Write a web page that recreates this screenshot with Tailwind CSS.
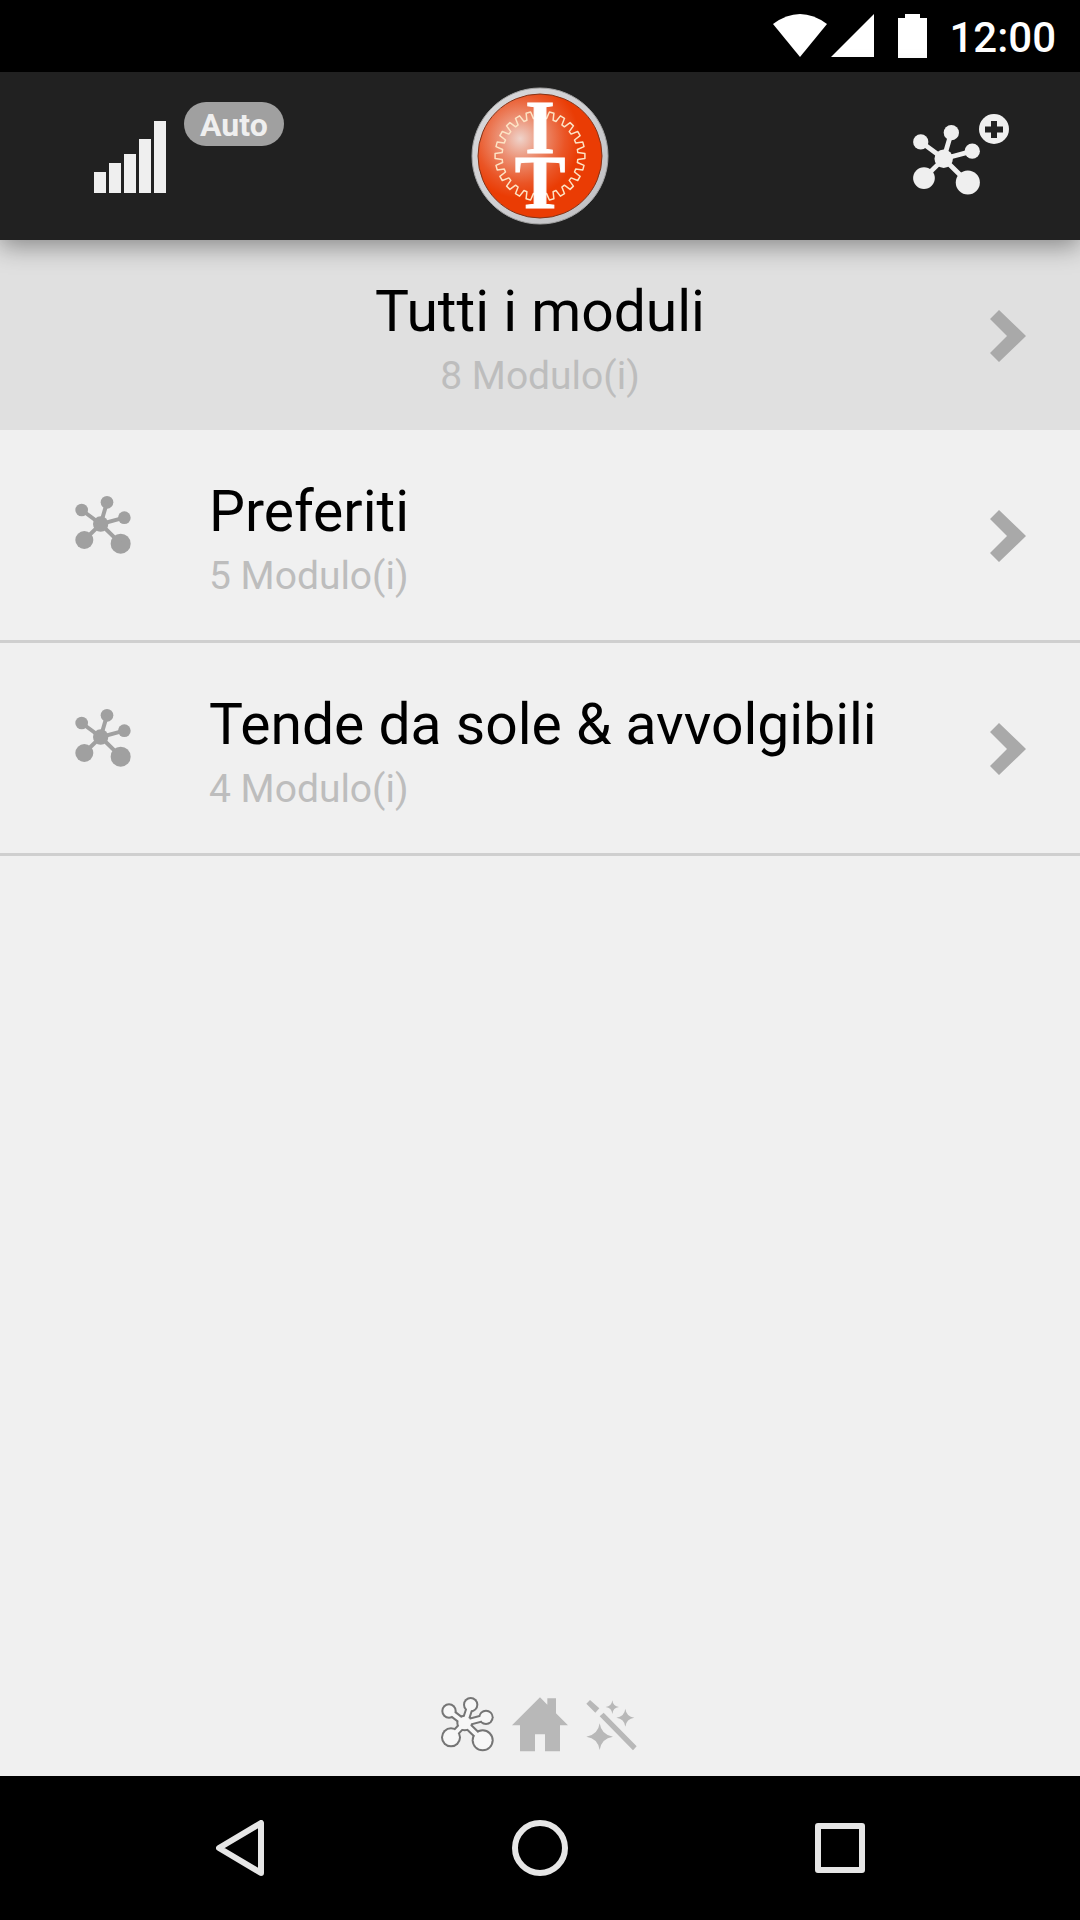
<!DOCTYPE html>
<html lang="it">
<head>
    <meta charset="UTF-8">
    <meta name="viewport" content="width=device-width, initial-scale=1.0">
    <title>Moduli</title>
    <script src="https://cdn.jsdelivr.net/npm/@tailwindcss/browser@4"></script>
</head>
<body class="flex flex-col min-h-screen bg-[#f0f0f0] font-[Roboto,sans-serif] text-black">
    <!-- shared icons -->
    <svg class="hidden" aria-hidden="true">
        <symbol id="molecule" viewBox="0 0 166 174">
            <g fill="currentColor" stroke="none">
                <circle cx="19" cy="42" r="19"/>
                <circle cx="95" cy="19" r="19"/>
                <circle cx="147" cy="65" r="19"/>
                <circle cx="76" cy="84" r="23"/>
                <circle cx="27" cy="132" r="27"/>
                <circle cx="136" cy="143" r="30"/>
            </g>
            <path d="M19 42L76 84L95 19M147 65L76 84L27 132M76 84L136 143" fill="none" stroke="currentColor" stroke-width="12"/>
        </symbol>
        <symbol id="chevron" viewBox="0 0 36 52">
            <path d="M0 9L9 0L36 26L9 52L0 43L17 26Z" fill="currentColor"/>
        </symbol>
    </svg>

    <div class="flex justify-end items-center h-[72px] bg-black text-white pr-6">
        <svg class="w-[54px] h-11" viewBox="0 0 54 44" fill="currentColor"><path d="M0 10Q27 -10 54 10L27 43Z"/></svg>
        <svg class="w-[43px] h-11 ml-1" viewBox="0 0 43 44" fill="currentColor"><path d="M43 0V43H0Z"/></svg>
        <svg class="w-[29px] h-11 ml-6" viewBox="0 0 29 44" fill="currentColor"><path d="M7 0H22V4H29V44H0V4H7Z"/></svg>
        <span class="ml-[22px] pt-[3px] text-[42px] leading-[48px] font-medium">12:00</span>
    </div>

    <header class="relative z-10 grid grid-cols-[1fr_auto_1fr] items-center h-[168px] bg-[#212121] text-[#efefef] shadow-[0_6px_24px_rgba(0,0,0,0.4)]">
        <button class="flex items-center h-full pl-[94px] gap-[18px]" aria-label="Segnale">
            <svg class="w-18 h-[74px]" viewBox="0 -2 72 74" fill="currentColor">
                <rect x="0" y="51" width="12" height="21"/>
                <rect x="15" y="42" width="12" height="30"/>
                <rect x="30" y="33" width="12" height="39"/>
                <rect x="45" y="18" width="12" height="54"/>
                <rect x="60" y="0" width="12" height="72"/>
            </svg>
            <span class="self-start mt-[30px] px-4 h-11 leading-[46px] rounded-full bg-[#a0a0a0] text-[32px] font-bold">Auto</span>
        </button>
        <svg class="w-[138px] h-[138px]" viewBox="-69 -69 138 138">
            <defs>
                <radialGradient id="orange" cx="0.34" cy="0.36" r="0.48">
                    <stop offset="0" stop-color="#efd3ca"/>
                    <stop offset="0.35" stop-color="#ec9276"/>
                    <stop offset="0.75" stop-color="#ea5526"/>
                    <stop offset="1" stop-color="#ea3c04"/>
                </radialGradient>
                <linearGradient id="rim" x1="0" y1="0" x2="1" y2="1">
                    <stop offset="0" stop-color="#d8d8da"/>
                    <stop offset="0.5" stop-color="#d0d0d3"/>
                    <stop offset="1" stop-color="#bdbdc0"/>
                </linearGradient>
            </defs>
            <circle r="68" fill="url(#rim)" stroke="#a3a3a3" stroke-width="1"/>
            <circle r="62" fill="url(#orange)" stroke="#843317" stroke-width="1"/>
            <path id="gear" fill="none" stroke="#fde3c4" stroke-width="1.5" stroke-linejoin="round"/>
            <g fill="#fff" font-family="Liberation Serif" font-weight="700" font-size="76" text-anchor="middle" stroke="#fff" stroke-width="1">
                <text x="0" y="-3">I</text>
                <text x="0" y="52">T</text>
            </g>
        </svg>
        <button class="justify-self-end h-full pr-[71px]" aria-label="Aggiungi modulo">
            <svg class="w-24 h-[84px]" viewBox="0 0 96 84">
                <use href="#molecule" x="0" y="11" width="67" height="70"/>
                <circle cx="81" cy="15" r="15" fill="currentColor"/>
                <path d="M81 7V24M72 15.5H90" stroke="#212121" stroke-width="6"/>
            </svg>
        </button>
    </header>

    <main class="grow">
        <a href="#tutti" class="flex items-center h-[190px] bg-[#e0e0e0] pr-[54px] pl-[90px]">
            <div class="grow text-center pt-[10px]">
                <h2 class="text-[57px] leading-[64px]">Tutti i moduli</h2>
                <p class="mt-2 text-[39px] leading-[48px] text-[#bdbdbd]">8 Modulo(i)</p>
            </div>
            <svg class="w-9 h-[52px] mt-[2px] text-[#a9a9a9]"><use href="#chevron"/></svg>
        </a>
        <a href="#preferiti" class="flex items-center h-[213px] border-b-3 border-[#cfcfcf] pr-[54px] pl-[75px]">
            <svg class="w-14 h-[58px] mb-5 text-[#a0a0a0]"><use href="#molecule"/></svg>
            <div class="grow pl-[78px] pt-[10px]">
                <h2 class="text-[57px] leading-[64px]">Preferiti</h2>
                <p class="mt-2 text-[39px] leading-[48px] text-[#bdbdbd]">5 Modulo(i)</p>
            </div>
            <svg class="w-9 h-[52px] mt-[2px] text-[#a9a9a9]"><use href="#chevron"/></svg>
        </a>
        <a href="#tende" class="flex items-center h-[213px] border-b-3 border-[#cfcfcf] pr-[54px] pl-[75px]">
            <svg class="w-14 h-[58px] mb-5 text-[#a0a0a0]"><use href="#molecule"/></svg>
            <div class="grow pl-[78px] pt-[10px]">
                <h2 class="text-[57px] leading-[64px]">Tende da sole &amp; avvolgibili</h2>
                <p class="mt-2 text-[39px] leading-[48px] text-[#bdbdbd]">4 Modulo(i)</p>
            </div>
            <svg class="w-9 h-[52px] mt-[2px] text-[#a9a9a9]"><use href="#chevron"/></svg>
        </a>
    </main>

    <div class="flex justify-center gap-[18px] pb-6 pr-[2px] text-[#b8b8b8]">
        <button aria-label="Moduli">
            <svg class="w-[53px] h-[55px]" viewBox="65 80 159 165">
                <g fill="#757575">
                    <path d="M89 122L136 158L154 103M200 141L136 158L95 201M136 158L190 210" fill="none" stroke="#757575" stroke-width="24"/>
                    <circle cx="89" cy="122" r="23"/>
                    <circle cx="154" cy="103" r="23"/>
                    <circle cx="200" cy="141" r="23"/>
                    <circle cx="136" cy="158" r="25"/>
                    <circle cx="95" cy="201" r="30"/>
                    <circle cx="190" cy="210" r="33"/>
                </g>
                <g fill="#f7f7f7">
                    <path d="M89 122L136 158L154 103M200 141L136 158L95 201M136 158L190 210" fill="none" stroke="#f7f7f7" stroke-width="12"/>
                    <circle cx="89" cy="122" r="17"/>
                    <circle cx="154" cy="103" r="17"/>
                    <circle cx="200" cy="141" r="17"/>
                    <circle cx="136" cy="158" r="19"/>
                    <circle cx="95" cy="201" r="24"/>
                    <circle cx="190" cy="210" r="27"/>
                </g>
            </svg>
        </button>
        <button aria-label="Casa">
            <svg class="w-14 h-[55px]" viewBox="276 80 168 165" fill="currentColor">
                <path d="M276 165L360 81L382 103V84H408V129L444 165H420V243H375V192H345V243H300V165Z"/>
            </svg>
        </button>
        <button aria-label="Scene">
            <svg class="w-[51px] h-[55px]" viewBox="500 80 153 165" fill="currentColor">
                <path d="M501 100L512 89L540 114L528 127ZM541 138L553 127L652 228L641 240Z"/>
                <path d="M579 90Q581 108 599 110Q581 112 579 131Q577 112 559 110Q577 108 579 90Z"/>
                <path d="M618 115Q621 139 645 142Q621 145 618 169Q615 145 591 142Q615 139 618 115Z"/>
                <path d="M541 159Q546 194 581 199Q546 204 541 239Q536 204 501 199Q536 194 541 159Z"/>
            </svg>
        </button>
    </div>

    <nav class="grid grid-cols-3 h-36 px-[90px] bg-black text-[#e6e6e6]">
        <button class="flex justify-center items-center" aria-label="Indietro">
            <svg class="w-12 h-14" viewBox="0 0 48 56" fill="none" stroke="currentColor" stroke-width="6" stroke-linejoin="round"><path d="M45 3V53L3 28Z"/></svg>
        </button>
        <button class="flex justify-center items-center" aria-label="Home">
            <svg class="w-14 h-14" viewBox="0 0 56 56" fill="none" stroke="currentColor" stroke-width="6"><circle cx="28" cy="28" r="25"/></svg>
        </button>
        <button class="flex justify-center items-center" aria-label="Recenti">
            <svg class="w-[50px] h-[50px]" viewBox="0 0 50 50" fill="none" stroke="currentColor" stroke-width="6" stroke-linejoin="round"><rect x="3" y="3" width="44" height="44"/></svg>
        </button>
    </nav>

    <script>
        // cog wheel around the logo letters
        var teeth = 24;
        var d = '';
        function point(radius, turn) {
            var a = turn * 2 * Math.PI / teeth;
            return (radius * Math.cos(a)).toFixed(1) + ' ' + (radius * Math.sin(a)).toFixed(1);
        }
        for (var i = 0; i < teeth; i++) {
            d += (i ? 'L' : 'M') + point(38, i - 0.34);
            d += 'L' + point(45, i - 0.2);
            d += 'L' + point(45, i + 0.2);
            d += 'L' + point(38, i + 0.34);
        }
        document.getElementById('gear').setAttribute('d', d + 'Z');
    </script>
</body>
</html>
